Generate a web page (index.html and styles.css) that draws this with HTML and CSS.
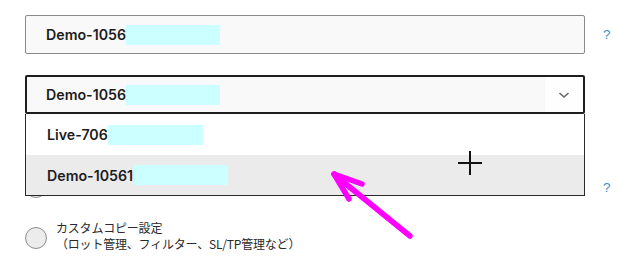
FILE: index.html
```html
<!DOCTYPE html>
<html lang="ja">
<head>
<meta charset="utf-8">
<title>Copy settings</title>
<link rel="stylesheet" href="styles.css">
</head>
<body>
<div class="form">
  <div class="row">
    <div class="field">
      <span class="acct">Demo-1056</span><span class="mask mask-a"></span>
    </div>
    <span class="help">?</span>
  </div>

  <div class="row row-select">
    <div class="select-wrap">
      <div class="select">
        <span class="acct">Demo-1056</span><span class="mask mask-a"></span>
        <span class="arrow-box">
          <svg width="12" height="8" viewBox="0 0 12 8"><path d="M1.5 2 L6 6 L10.5 2" fill="none" stroke="#666" stroke-width="1.6"/></svg>
        </span>
      </div>
      <ul class="list">
        <li class="opt"><span class="acct">Live-706</span><span class="mask mask-b"></span></li>
        <li class="opt opt-hover"><span class="acct">Demo-10561</span><span class="mask mask-c"></span></li>
      </ul>
    </div>
  </div>

  <div class="row row-hidden">
    <span class="radio"></span>
    <span class="spacer"></span>
    <span class="help">?</span>
  </div>

  <div class="row row-custom">
    <span class="radio"></span>
    <div class="label">
      <div>カスタムコピー設定</div>
      <div>（ロット管理、フィルター、SL/TP管理など）</div>
    </div>
  </div>
</div>

<svg class="overlay" width="625" height="261" viewBox="0 0 625 261">
  <g stroke="#111" stroke-width="2">
    <line x1="458" y1="163" x2="482" y2="163"/>
    <line x1="470" y1="151" x2="470" y2="175"/>
  </g>
  <g stroke="#ff00ff" stroke-width="5.5" stroke-linecap="round" fill="none">
    <line x1="410" y1="236" x2="336" y2="176"/>
    <line x1="334" y1="174" x2="362" y2="184"/>
    <line x1="334" y1="174" x2="349" y2="199"/>
  </g>
</svg>
</body>
</html>
```
FILE: styles.css
```css
html, body {
  margin: 0;
  padding: 0;
  background: #ffffff;
}
body {
  width: 625px;
  height: 261px;
  overflow: hidden;
  position: relative;
  font-family: Inter, "Noto Sans", sans-serif;
}
ul { margin: 0; padding: 0; list-style: none; }

.form {
  display: flex;
  flex-direction: column;
  padding: 15px 0 0 25px;
}
.row {
  display: flex;
  align-items: center;
}
.field {
  box-sizing: border-box;
  width: 560px;
  height: 39px;
  border: 1px solid #8a8a8a;
  border-radius: 2px;
  background: #f9f9f9;
  display: flex;
  align-items: center;
  padding-left: 20px;
}
.acct {
  font-weight: 600;
  font-size: 14.2px;
  color: #1c1c1c;
}
.mask {
  display: inline-block;
  height: 20px;
  background: #ccffff;
}
.mask-a { width: 94px; }
.mask-b { width: 95px; }
.mask-c { width: 94px; margin-left: 1px; }
.help {
  margin-left: 18px;
  font-family: "Liberation Sans", sans-serif;
  font-size: 13.5px;
  color: #3a8fc8;
}

.row-select { margin-top: 21px; }
.select-wrap {
  position: relative;
  width: 560px;
}
.select {
  box-sizing: border-box;
  height: 39px;
  border: 2px solid #1e1e1e;
  border-radius: 2px;
  background: #f9f9f9;
  display: flex;
  align-items: center;
  padding-left: 19px;
}
.arrow-box {
  margin-left: auto;
  width: 38px;
  height: 100%;
  background: #fefefe;
  display: flex;
  align-items: center;
  justify-content: center;
}
.list {
  position: absolute;
  top: 100%;
  left: 0;
  right: 0;
  box-sizing: border-box;
  border: 1px solid #2a2a2a;
  border-top: none;
  background: #ffffff;
  z-index: 2;
}
.opt {
  height: 40px;
  display: flex;
  align-items: center;
  padding-left: 21px;
}
.opt:first-child { height: 41px; }
.opt-hover { background: #ebebeb; }

.radio {
  box-sizing: border-box;
  width: 22px;
  height: 22px;
  border-radius: 50%;
  border: 1px solid #8c8c8c;
  background: #ececec;
  flex: none;
}
.row-hidden { margin-top: 62px; }
.spacer { width: 538px; }
.row-hidden .help { margin-left: 18px; }

.row-custom {
  margin-top: 24px;
  align-items: flex-start;
}
.row-custom .radio { margin-top: 5px; }
.label {
  margin-left: 9px;
  font-family: "Noto Sans CJK JP", sans-serif;
  font-size: 12px;
  line-height: 16px;
  letter-spacing: -0.2px;
  color: #2a2a2a;
  margin-top: -2px;
}

.overlay {
  position: absolute;
  left: 0;
  top: 0;
  z-index: 5;
  pointer-events: none;
}
```
